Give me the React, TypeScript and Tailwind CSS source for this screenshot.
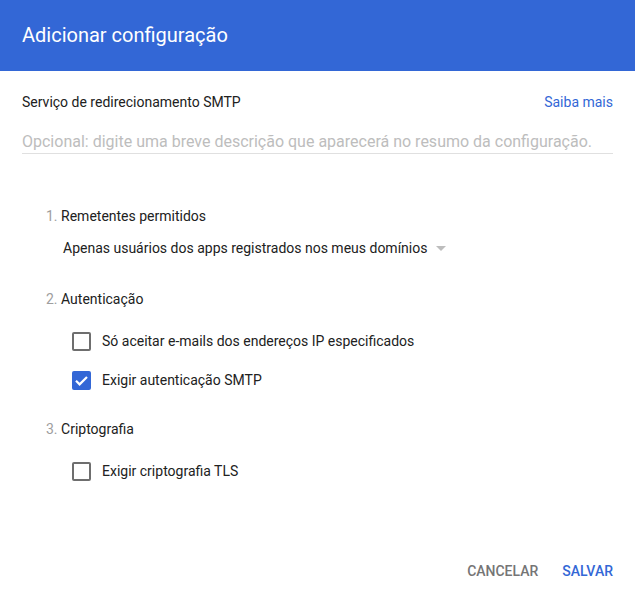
import React, { useState } from 'react'

const Check = ({ checked, label, onToggle }: { checked: boolean; label: string; onToggle: () => void }) => (
  <label className="flex items-center gap-[11px] h-[20px] cursor-pointer" onClick={onToggle}>
    {checked ? (
      <span className="w-[19px] h-[19px] shrink-0 rounded-[2px] bg-[#3367d6] flex items-center justify-center">
        <svg width="19" height="19" viewBox="0 0 19 19">
          <path d="M4 9.8l3.6 3.6L15 6" fill="none" stroke="#fff" strokeWidth="2.2" />
        </svg>
      </span>
    ) : (
      <span className="w-[19px] h-[19px] shrink-0 rounded-[2px] border-2 border-[#6e6e6e]" />
    )}
    <span className="text-[14px] text-[#212121]">{label}</span>
  </label>
)

export default function App() {
  const [ipOnly, setIpOnly] = useState(false)
  const [smtpAuth, setSmtpAuth] = useState(true)
  const [tls, setTls] = useState(false)

  return (
    <div className="w-[635px] h-[597px] bg-white flex flex-col font-['Roboto',sans-serif]">
      {/* Header */}
      <div className="h-[71px] bg-[#3367d6] flex items-center px-[22px] shrink-0">
        <h1 className="text-[20px] text-white font-normal pb-[2px]">Adicionar configuração</h1>
      </div>

      <div className="px-[22px] pt-[21px]">
        <div className="flex justify-between items-center h-[20px]">
          <span className="text-[14px] text-[#212121]">Serviço de redirecionamento SMTP</span>
          <a className="text-[14px] text-[#3367d6]">Saiba mais</a>
        </div>
        <input
          className="mt-[12px] w-full h-[30px] pt-[6px] border-b border-[#e0e0e0] text-[16px] text-[#212121] placeholder:text-[#bdbdbd] outline-none"
          placeholder="Opcional: digite uma breve descrição que aparecerá no resumo da configuração."
        />
      </div>

      <div className="pl-[46px] pt-[52px] text-[14px]">
        <div className="h-[20px] flex items-center">
          <span className="text-[#9e9e9e]">1.&nbsp;</span>
          <span className="text-[#212121]">Remetentes permitidos</span>
        </div>
        <div className="mt-[12px] pl-[17px] h-[20px] flex items-center gap-[9px]">
          <span className="text-[#212121]">Apenas usuários dos apps registrados nos meus domínios</span>
          <span className="w-0 h-0 border-l-[5px] border-r-[5px] border-t-[5px] border-l-transparent border-r-transparent border-t-[#bdbdbd]" />
        </div>

        <div className="mt-[31px] h-[20px] flex items-center">
          <span className="text-[#9e9e9e]">2.&nbsp;</span>
          <span className="text-[#212121]">Autenticação</span>
        </div>
        <div className="mt-[22px] pl-[26px] flex flex-col gap-[19px]">
          <Check checked={ipOnly} label="Só aceitar e-mails dos endereços IP especificados" onToggle={() => setIpOnly(!ipOnly)} />
          <Check checked={smtpAuth} label="Exigir autenticação SMTP" onToggle={() => setSmtpAuth(!smtpAuth)} />
        </div>

        <div className="mt-[29px] h-[20px] flex items-center">
          <span className="text-[#9e9e9e]">3.&nbsp;</span>
          <span className="text-[#212121]">Criptografia</span>
        </div>
        <div className="mt-[22px] pl-[26px]">
          <Check checked={tls} label="Exigir criptografia TLS" onToggle={() => setTls(!tls)} />
        </div>
      </div>

      <div className="mt-auto mb-[16px] px-[22px] flex justify-end items-center gap-[24px] h-[20px]">
        <button className="text-[14px] text-[#757575] font-medium">CANCELAR</button>
        <button className="text-[14px] text-[#3367d6] font-medium">SALVAR</button>
      </div>
    </div>
  )
}
